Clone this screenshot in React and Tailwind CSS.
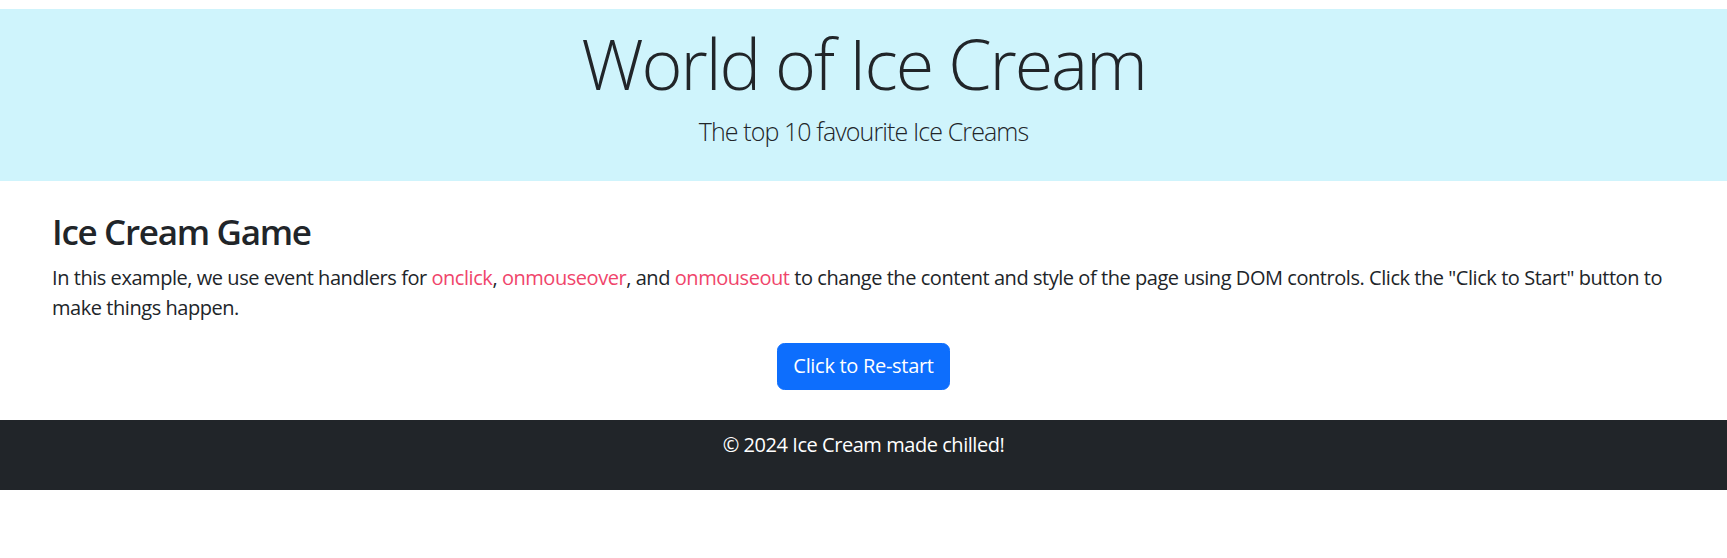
export default function App() {
  return (
    <div className="w-full bg-white text-[#212529]" style={{ fontFamily: '"Open Sans", "Noto Sans", sans-serif' }}>
      <header className="mt-[9px] bg-[#cff4fc] pt-[12px] pb-[30px] text-center">
        <h1 className="text-[70px] leading-[84px] font-light mb-[8px] tracking-[-2.1px]">World of Ice Cream</h1>
        <p className="text-[25px] leading-[37.5px] font-light tracking-[-0.9px]">The top 10 favourite Ice Creams</p>
      </header>
      <main className="px-[52px] pt-[30px] pb-[30px]">
        <h3 className="text-[35px] leading-[42px] font-semibold mb-[10px] tracking-[-1.3px]">Ice Cream Game</h3>
        <p className="text-[20px] leading-[30px] mb-[20px] tracking-[-0.45px]">
          In this example, we use event handlers for <span className="text-[#f0456b]">onclick</span>,{' '}
          <span className="text-[#f0456b]">onmouseover</span>, and{' '}
          <span className="text-[#f0456b]">onmouseout</span> to change the content and style of the page using DOM
          controls. Click the "Click to Start" button to make things happen.
        </p>
        <div className="flex justify-center">
          <button className="bg-[#0d6efd] text-white text-[20px] leading-[30px] px-[15px] py-[7.5px] border-[1.25px] border-[#0d6efd] rounded-[7.5px] tracking-[-0.3px]">
            Click to Re-start
          </button>
        </div>
      </main>
      <footer className="bg-[#212529] text-white text-center pt-[10px] pb-[10px]">
        <p className="text-[20px] leading-[30px] mb-[20px] tracking-[-0.45px]">© 2024 Ice Cream made chilled!</p>
      </footer>
    </div>
  );
}
